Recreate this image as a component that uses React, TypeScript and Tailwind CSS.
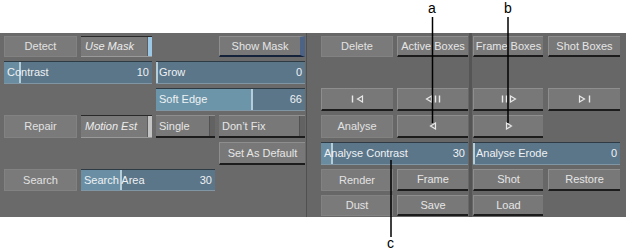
import type { ReactNode } from 'react'

const ui = "font-['Liberation_Sans',Arial,sans-serif] text-[11px] leading-none"

function Flat({ label, className = '' }: { label: string; className?: string }) {
  return (
    <div
      className={`flex items-center justify-center bg-[#7a7a7a] border border-[#828282] text-[#e2e2e2] ${className}`}
    >
      {label}
    </div>
  )
}

function Raised({ children, className = '' }: { children: ReactNode; className?: string }) {
  return (
    <div
      className={`flex items-center justify-center bg-[#787878] border-t border-l border-[#8e8e8e] border-b-2 border-b-[#1c1c1c] text-[#e6e6e6] ${className}`}
    >
      {children}
    </div>
  )
}

function Toggle({ label, lamp, className = '' }: { label: string; lamp: string; className?: string }) {
  return (
    <div
      className={`flex bg-[#7a7a7a] border-t border-t-[#2a2a2a] border-b border-b-[#9a9a9a] text-[#ececec] italic ${className}`}
    >
      <span className="flex-1 flex items-center pl-[4px]">{label}</span>
      <span className={`w-[5px] border-l border-[#5e5e5e] ${lamp}`} />
    </div>
  )
}

function Split({ label, className = '' }: { label: string; className?: string }) {
  return (
    <div
      className={`flex bg-[#787878] border-t border-[#8e8e8e] border-b-2 border-b-[#1c1c1c] text-[#e6e6e6] ${className}`}
    >
      <span className="flex-1 flex items-center pl-[3px]">{label}</span>
      <span className="w-[6px] bg-[#626262] border-l border-[#525252]" />
    </div>
  )
}

function Slider({
  label,
  value,
  fill,
  tint = '#6a8ca1',
  className = '',
}: {
  label: string
  value: number
  fill: number
  tint?: string
  className?: string
}) {
  // fill = px from the left edge where the handle sits
  const bg = `linear-gradient(to right, ${tint} ${fill}px, #b5cdd9 ${fill}px, #b5cdd9 ${fill + 2}px, #5b7589 ${fill + 2}px)`
  return (
    <div
      className={`flex items-center justify-between px-[3px] border-t border-t-[#2e3a44] border-b border-b-[#8096a4] text-[#eef2f4] ${className}`}
      style={{ background: bg }}
    >
      <span>{label}</span>
      <span>{value}</span>
    </div>
  )
}

const ico = 'stroke-[#e8e8e8] fill-none'

function Tri({ dir }: { dir: 'l' | 'r' }) {
  return (
    <svg width="8" height="8" viewBox="0 0 8 8" className={ico} strokeWidth="1.2">
      {dir === 'l' ? <path d="M6.5 1L1.5 4L6.5 7Z" /> : <path d="M1.5 1L6.5 4L1.5 7Z" />}
    </svg>
  )
}

function Bar() {
  return (
    <svg width="3" height="8" viewBox="0 0 3 8" className={ico} strokeWidth="1.4">
      <path d="M1.5 0.5V7.5" />
    </svg>
  )
}

export default function App() {
  return (
    <div className={`relative w-[626px] h-[250px] bg-white ${ui}`}>
      <div className="h-[33px]" />

      <div className="flex h-[184px] bg-[#6a6a6a]">
        {/* left panel */}
        <div className="w-[306px] pt-[3px] pl-[4px] grid grid-cols-[73px_71px_59px_86px] grid-rows-[21px_23px_23px_23px_23px_22px_21px] gap-x-[4px] gap-y-[4px]">
          <Flat label="Detect" className="col-start-1 row-start-1" />
          <Toggle label="Use Mask" lamp="bg-[#9cc8e6]" className="col-start-2 row-start-1" />
          <Raised className="col-start-4 row-start-1 border-r-[5px] border-r-[#4c6385] border-b-[#14223a]">
            Show Mask
          </Raised>

          <Slider label="Contrast" value={10} fill={15} className="col-start-1 col-span-2 row-start-2" />
          <Slider label="Grow" value={0} fill={0} className="col-start-3 col-span-2 row-start-2" />
          <Slider
            label="Soft Edge"
            value={66}
            fill={95}
            tint="#6c95a9"
            className="col-start-3 col-span-2 row-start-3"
          />

          <Flat label="Repair" className="col-start-1 row-start-4" />
          <Toggle label="Motion Est" lamp="bg-[#c4c4c4]" className="col-start-2 row-start-4" />
          <Split label="Single" className="col-start-3 row-start-4" />
          <Split label="Don’t Fix" className="col-start-4 row-start-4" />

          <Raised className="col-start-4 row-start-5">Set As Default</Raised>

          <Flat label="Search" className="col-start-1 row-start-6" />
          <Slider
            label="Search Area"
            value={30}
            fill={39}
            tint="#6a8fa5"
            className="col-start-2 col-span-2 row-start-6"
          />
        </div>

        <div className="w-px bg-[#505050]" />

        {/* right panel */}
        <div className="flex flex-1 bg-[#676767] pl-[14px]">
          <div className="pt-[3px] grid grid-cols-[72px_71px] grid-rows-[21px_23px_23px_23px_23px_22px_21px] gap-x-[4px] gap-y-[4px]">
            <Flat label="Delete" className="col-start-1 row-start-1" />
            <Raised className="col-start-2 row-start-1">Active Boxes</Raised>

            <Raised className="col-start-1 row-start-3 gap-[2px]">
              <Bar />
              <Tri dir="l" />
            </Raised>
            <Raised className="col-start-2 row-start-3 gap-[1px]">
              <Tri dir="l" />
              <Bar />
              <Bar />
            </Raised>

            <Flat label="Analyse" className="col-start-1 row-start-4" />
            <Raised className="col-start-2 row-start-4">
              <Tri dir="l" />
            </Raised>

            <Slider
              label="Analyse Contrast"
              value={30}
              fill={10}
              className="col-start-1 col-span-2 row-start-5"
            />

            <Flat label="Render" className="col-start-1 row-start-6" />
            <Raised className="col-start-2 row-start-6">Frame</Raised>

            <Flat label="Dust" className="col-start-1 row-start-7" />
            <Raised className="col-start-2 row-start-7">Save</Raised>
          </div>

          <div className="ml-[1px] w-[3px] bg-[#555555]" />

          <div className="ml-[1px] pt-[3px] grid grid-cols-[70px_72px] grid-rows-[21px_23px_23px_23px_23px_22px_21px] gap-x-[5px] gap-y-[4px]">
            <Raised className="col-start-1 row-start-1">Frame Boxes</Raised>
            <Raised className="col-start-2 row-start-1">Shot Boxes</Raised>

            <Raised className="col-start-1 row-start-3 gap-[1px]">
              <Bar />
              <Bar />
              <Tri dir="r" />
            </Raised>
            <Raised className="col-start-2 row-start-3 gap-[2px]">
              <Tri dir="r" />
              <Bar />
            </Raised>

            <Raised className="col-start-1 row-start-4">
              <Tri dir="r" />
            </Raised>

            <Slider label="Analyse Erode" value={0} fill={0} className="col-start-1 col-span-2 row-start-5" />

            <Raised className="col-start-1 row-start-6">Shot</Raised>
            <Raised className="col-start-2 row-start-6">Restore</Raised>

            <Raised className="col-start-1 row-start-7">Load</Raised>
          </div>
        </div>
      </div>

      {/* callouts */}
      <svg className="absolute inset-0 pointer-events-none" width="626" height="250">
        <line x1="432.5" y1="17" x2="432.5" y2="123" stroke="#000" strokeWidth="1.5" />
        <line x1="508" y1="17" x2="508" y2="123" stroke="#000" strokeWidth="1.5" />
        <line x1="391" y1="160" x2="391" y2="237" stroke="#000" strokeWidth="1.5" />
      </svg>
      <span className="absolute left-[428px] top-[1px] text-[14px] text-black">a</span>
      <span className="absolute left-[504px] top-[1px] text-[14px] text-black">b</span>
      <span className="absolute left-[387px] top-[236px] text-[14px] text-black">c</span>
    </div>
  )
}
